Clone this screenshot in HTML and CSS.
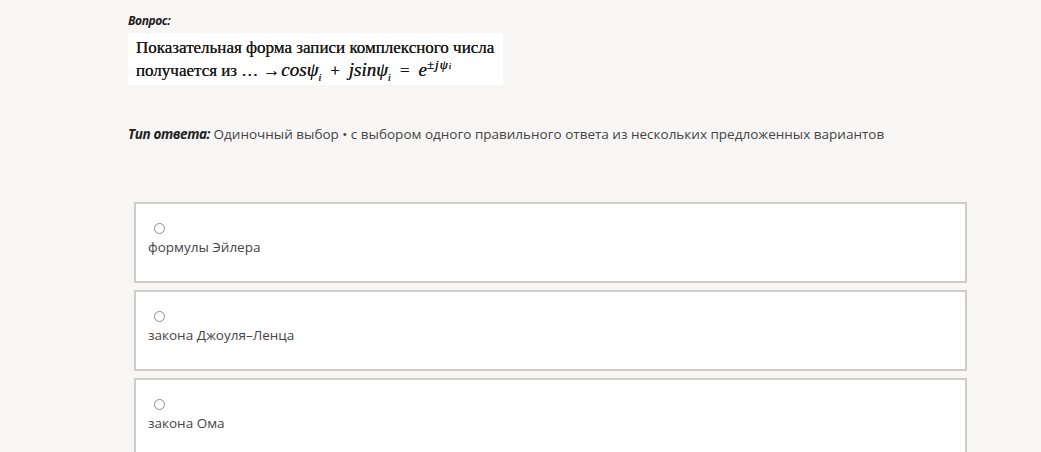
FILE: index.html
```html
<!DOCTYPE html>
<html lang="ru">
<head>
  <meta charset="UTF-8" />
  <meta name="viewport" content="width=device-width, initial-scale=1" />
  <title>Вопрос</title>
  <link rel="stylesheet" href="styles.css">
</head>
<body>

  <div class="page">
    <div class="label">Вопрос:</div>

    <div class="question">
      <div>Показательная форма записи комплексного числа</div>
      <div>получается из …<span class="arrow">→</span><i>cosψ<sub>i</sub></i><span class="op">+</span><i>jsinψ<sub>i</sub></i><span class="op">=</span><i>e<sup>±jψ<sub>i</sub></sup></i></div>
    </div>

    <p class="answer-type"><b><i>Тип ответа:</i></b> Одиночный выбор • с выбором одного правильного ответа из нескольких предложенных вариантов</p>

    <div class="options">
      <label class="option">
        <input type="radio" name="answer">
        <span>формулы Эйлера</span>
      </label>
      <label class="option">
        <input type="radio" name="answer">
        <span>закона Джоуля–Ленца</span>
      </label>
      <label class="option">
        <input type="radio" name="answer">
        <span>закона Ома</span>
      </label>
    </div>
  </div>

</body>
</html>
```

FILE: styles.css
```css
body {
  margin: 0;
  background-color: #f7f6f4;
  font-family: "Open Sans", "Noto Sans", sans-serif;
  font-size: 13.5px;
  color: #444;
}
.page {
  padding: 12px 0 0 128px;
}
.label {
  font-size: 12px;
  font-weight: bold;
  font-style: italic;
  color: #222;
  letter-spacing: -0.4px;
  line-height: 18px;
}
.question {
  display: inline-block;
  background: white;
  margin-top: 3px;
  height: 52px;
  box-sizing: border-box;
  padding: 4px 9px 0 8px;
  font-family: "Liberation Serif", serif;
  font-size: 17px;
  line-height: 22px;
  color: #1a1a1a;
  text-shadow: 0 0 0.4px #1a1a1a;
}
.question i {
  font-size: 19px;
}
.question sub {
  font-size: 10px;
  line-height: 0;
}
.question sup {
  font-size: 13px;
  line-height: 0;
  vertical-align: 7px;
  letter-spacing: 1px;
}
.question sup sub {
  font-size: 9px;
  vertical-align: 0;
}
.question .arrow {
  margin: 0 1px 0 5px;
}
.question .op {
  margin: 0 9px;
}
.answer-type {
  margin: 39px 0 0 0;
  line-height: 20px;
}
.answer-type b {
  color: #222;
  letter-spacing: -0.4px;
}
.options {
  margin: 58px 0 0 6px;
  width: 833px;
  display: flex;
  flex-direction: column;
  gap: 7px;
}
.option {
  display: flex;
  flex-direction: column;
  align-items: flex-start;
  background: white;
  border: 2px solid #cfcdcb;
  height: 81px;
  box-sizing: border-box;
  padding: 19px 12px;
}
.option input {
  appearance: none;
  margin: 0 0 0 6px;
  width: 11px;
  height: 11px;
  border: 1px solid #8a8a8a;
  border-radius: 50%;
  box-sizing: border-box;
}
.option span {
  margin-top: 4px;
  line-height: 18px;
}
```
